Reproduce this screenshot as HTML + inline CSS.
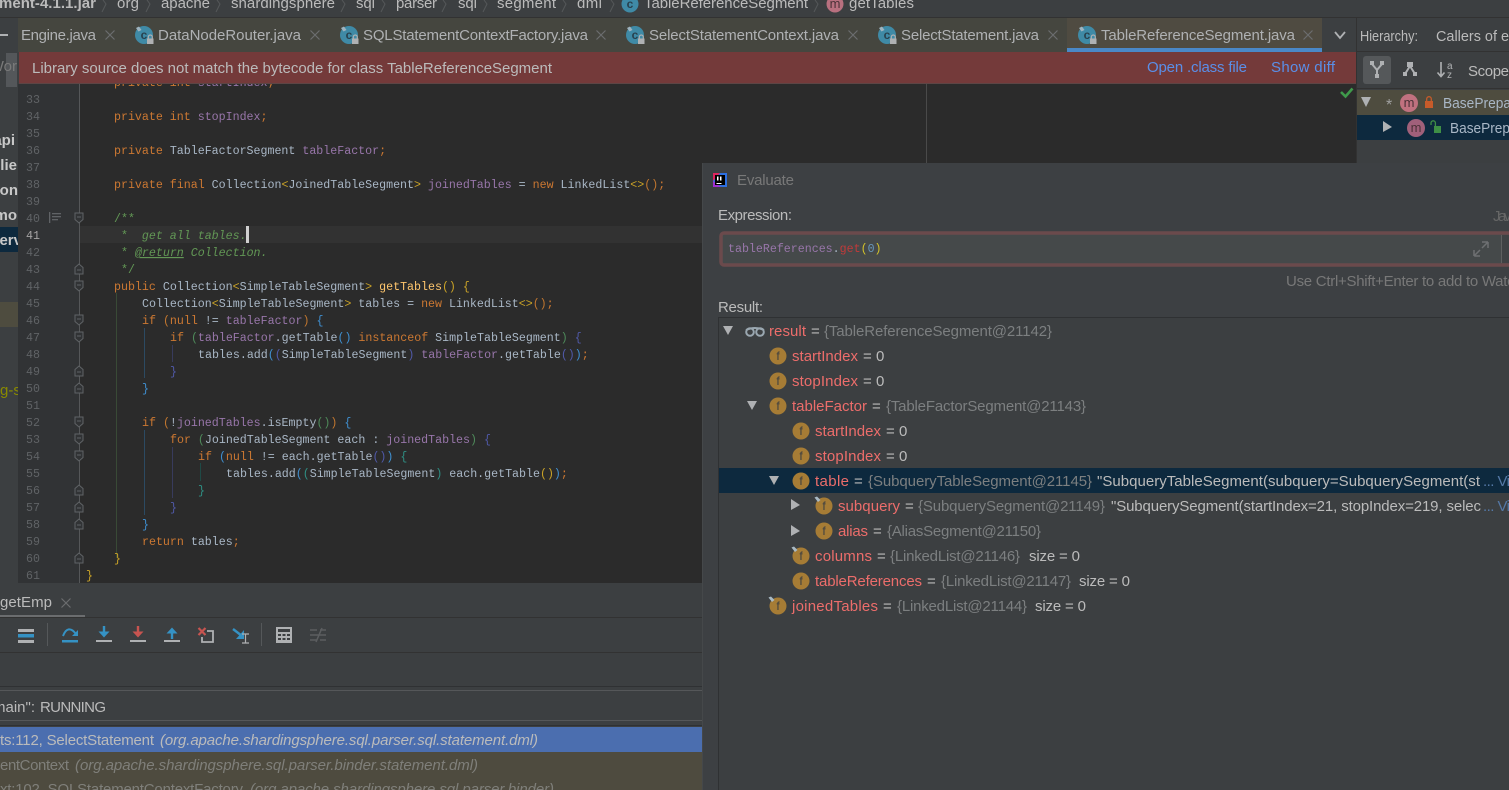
<!DOCTYPE html>
<html lang="en">
<head>
<meta charset="utf-8">
<title>IntelliJ IDEA - TableReferenceSegment</title>
<style>
html,body{margin:0;padding:0;background:#3c3f41;width:1509px;height:790px;overflow:hidden}
svg{display:block}
text{white-space:pre}
.u{font-family:"Liberation Sans",sans-serif;font-size:15px;fill:#bbbbbb}
.t{font-family:"Liberation Sans",sans-serif;font-size:15px;fill:#afb1b3}
.b{font-family:"Liberation Sans",sans-serif;font-size:15px;font-weight:bold;fill:#c8c8c8}
.m{font-family:"Liberation Mono",monospace;font-size:11.64px;fill:#a9b7c6}
.n{font-family:"Liberation Mono",monospace;font-size:11.64px;fill:#606366}
.k{fill:#cc7832}.v{fill:#9876aa}.c{fill:#629755}.y{fill:#ffc66d}.g{fill:#c9a227}
.o{fill:#c0762f}.l{fill:#3f8fd0}.gr{fill:#4e8a5a}.i{fill:#5059a8}.te{fill:#2f8f84}
.nm{font-family:"Liberation Sans",sans-serif;font-size:15px;fill:#ec6d6b}
.val{font-family:"Liberation Sans",sans-serif;font-size:15px;fill:#7c7f80}
.ff{font-family:"Liberation Sans",sans-serif;font-size:12px;fill:#3c3f41;text-anchor:middle}
.cc{font-family:"Liberation Sans",sans-serif;font-weight:bold;font-size:12px;fill:#28414e;text-anchor:middle}
.mm{font-family:"Liberation Sans",sans-serif;font-size:13px;fill:#4c3238;text-anchor:middle}
</style>
</head>
<body>
<svg width="1509" height="790" viewBox="0 0 1509 790" xmlns="http://www.w3.org/2000/svg">
<defs>
<symbol id="cls" overflow="visible" viewBox="0 0 20 20" width="20" height="20">
<circle cx="10" cy="10" r="9" fill="#3f8aa6"/>
<path d="M2 3 L5 1.5 L7.5 5 L4.5 6.5Z" fill="#9fb4bf"/>
<rect x="13" y="13.5" width="6.5" height="5.5" fill="#afb1b3"/>
<path d="M14.3 13.5v-1.5a2 2 0 0 1 4 0v1.5" fill="none" stroke="#afb1b3" stroke-width="1.2"/>
</symbol>
<symbol id="fstart" overflow="visible" viewBox="0 0 10 12" width="10" height="12">
<path d="M1 1H9V7.5L5 11L1 7.5Z" fill="#313335" stroke="#606366" stroke-width="1"/>
<path d="M3 5H7" stroke="#606366"/>
</symbol>
<symbol id="fend" overflow="visible" viewBox="0 0 10 12" width="10" height="12">
<path d="M1 11H9V4.5L5 1L1 4.5Z" fill="#313335" stroke="#606366" stroke-width="1"/>
<path d="M3 7H7" stroke="#606366"/>
</symbol>
<symbol id="pin" overflow="visible" viewBox="0 0 8 8" width="8" height="8">
<path d="M0.5 1.5 L3 0.5 L6.5 4 L4 6Z" fill="#a9bac4"/>
</symbol>
</defs>

<rect width="1509" height="790" fill="#3c3f41"/>

<!-- left project panel -->
<rect x="0" y="18" width="18" height="566" fill="#3c3f41"/>
<rect x="0" y="34" width="8" height="2" fill="#afb1b3"/>
<rect x="6" y="53" width="11" height="34" fill="#54575a"/>
<text class="u" x="17" y="71" text-anchor="end" style="fill:#7a7a7a">Wor</text>
<rect x="0" y="227" width="18" height="25" fill="#0d293e"/>
<rect x="0" y="302" width="18" height="25" fill="#4e4c3f"/>
<text class="b" x="15" y="145" text-anchor="end">api</text>
<text class="b" x="17" y="170" text-anchor="end">clie</text>
<text class="b" x="18" y="195" text-anchor="end">con</text>
<text class="b" x="17" y="220" text-anchor="end">mo</text>
<text class="b" x="22" y="245" text-anchor="end">serv</text>
<text class="u" x="0" y="395" style="fill:#8a8a00">g-s</text>

<!-- editor -->
<rect x="18" y="84" width="62" height="500" fill="#313335"/>
<rect x="80" y="84" width="1276" height="499" fill="#2b2b2b"/>
<rect x="18" y="226" width="62" height="17" fill="#313335"/>
<rect x="80" y="226" width="622" height="17" fill="#323232"/>
<rect x="79" y="84" width="1" height="499" fill="#555759"/>
<rect x="926" y="84" width="1" height="80" fill="#4a4a4a"/>

<!-- indent guides -->
<rect x="116" y="293" width="1" height="265" fill="#394a36"/>
<rect x="144" y="328" width="1" height="50" fill="#2c4a62"/>
<rect x="172" y="345" width="1" height="17" fill="#383b5c"/>
<rect x="144" y="430" width="1" height="85" fill="#2c4a62"/>
<rect x="172" y="447" width="1" height="51" fill="#383b5c"/>
<rect x="200" y="463" width="1" height="18" fill="#1f4a46"/>

<!-- line numbers -->
<text class="n" x="26" y="103">33</text>
<text class="n" x="26" y="120">34</text>
<text class="n" x="26" y="137">35</text>
<text class="n" x="26" y="154">36</text>
<text class="n" x="26" y="171">37</text>
<text class="n" x="26" y="188">38</text>
<text class="n" x="26" y="205">39</text>
<text class="n" x="26" y="222">40</text>
<text class="n" x="26" y="239" style="fill:#a4a3a3">41</text>
<text class="n" x="26" y="256">42</text>
<text class="n" x="26" y="273">43</text>
<text class="n" x="26" y="290">44</text>
<text class="n" x="26" y="307">45</text>
<text class="n" x="26" y="324">46</text>
<text class="n" x="26" y="341">47</text>
<text class="n" x="26" y="358">48</text>
<text class="n" x="26" y="375">49</text>
<text class="n" x="26" y="392">50</text>
<text class="n" x="26" y="409">51</text>
<text class="n" x="26" y="426">52</text>
<text class="n" x="26" y="443">53</text>
<text class="n" x="26" y="460">54</text>
<text class="n" x="26" y="477">55</text>
<text class="n" x="26" y="494">56</text>
<text class="n" x="26" y="511">57</text>
<text class="n" x="26" y="528">58</text>
<text class="n" x="26" y="545">59</text>
<text class="n" x="26" y="562">60</text>
<text class="n" x="26" y="579">61</text>

<!-- doc icon -->
<g fill="#606366"><rect x="49" y="212" width="1.3" height="11"/><rect x="52" y="213" width="9" height="1.3"/><rect x="52" y="216" width="9" height="1.3"/><rect x="52" y="219" width="6" height="1.3"/></g>

<!-- fold markers -->
<use href="#fstart" x="74" y="212"/>
<use href="#fend" x="74" y="263"/>
<use href="#fstart" x="74" y="280"/>
<use href="#fstart" x="74" y="314"/>
<use href="#fstart" x="74" y="331"/>
<use href="#fend" x="74" y="365"/>
<use href="#fend" x="74" y="382"/>
<use href="#fstart" x="74" y="416"/>
<use href="#fstart" x="74" y="433"/>
<use href="#fstart" x="74" y="450"/>
<use href="#fend" x="74" y="484"/>
<use href="#fend" x="74" y="501"/>
<use href="#fend" x="74" y="518"/>
<use href="#fend" x="74" y="552"/>

<!-- code -->
<text class="m" x="114" y="86"><tspan class="k">private int </tspan><tspan class="v">startIndex</tspan><tspan class="k">;</tspan></text>
<text class="m" x="114" y="120"><tspan class="k">private int </tspan><tspan class="v">stopIndex</tspan><tspan class="k">;</tspan></text>
<text class="m" x="114" y="154"><tspan class="k">private </tspan>TableFactorSegment <tspan class="v">tableFactor</tspan><tspan class="k">;</tspan></text>
<text class="m" x="114" y="188"><tspan class="k">private final </tspan>Collection<tspan class="g">&lt;</tspan>JoinedTableSegment<tspan class="g">&gt;</tspan> <tspan class="v">joinedTables</tspan> = <tspan class="k">new </tspan>LinkedList<tspan class="g">&lt;&gt;</tspan><tspan class="o">()</tspan><tspan class="k">;</tspan></text>
<text class="m c" x="114" y="222">/**</text>
<text class="m" x="114" y="239"><tspan class="c"> *  </tspan><tspan class="c" font-style="italic">get all tables.</tspan></text>
<rect x="246" y="226" width="3" height="17" fill="#d0d0d0"/>
<text class="m" x="114" y="256"><tspan class="c"> * </tspan><tspan class="c" font-style="italic" text-decoration="underline">@return</tspan><tspan class="c" font-style="italic"> Collection.</tspan></text>
<text class="m c" x="114" y="273"> */</text>
<text class="m" x="114" y="290"><tspan class="k">public </tspan>Collection<tspan class="g">&lt;</tspan>SimpleTableSegment<tspan class="g">&gt;</tspan> <tspan class="y">getTables</tspan><tspan class="g">() {</tspan></text>
<text class="m" x="142" y="307">Collection<tspan class="g">&lt;</tspan>SimpleTableSegment<tspan class="g">&gt;</tspan> tables = <tspan class="k">new </tspan>LinkedList<tspan class="g">&lt;&gt;</tspan><tspan class="o">()</tspan><tspan class="k">;</tspan></text>
<text class="m" x="142" y="324"><tspan class="k">if </tspan><tspan class="o">(</tspan><tspan class="k">null</tspan> != <tspan class="v">tableFactor</tspan><tspan class="o">)</tspan> <tspan class="l">{</tspan></text>
<text class="m" x="170" y="341"><tspan class="k">if </tspan><tspan class="gr">(</tspan><tspan class="v">tableFactor</tspan>.getTable<tspan class="l">()</tspan> <tspan class="k">instanceof </tspan>SimpleTableSegment<tspan class="gr">)</tspan> <tspan class="i">{</tspan></text>
<text class="m" x="198" y="358">tables.add<tspan class="l">(</tspan><tspan class="i">(</tspan>SimpleTableSegment<tspan class="i">)</tspan> <tspan class="v">tableFactor</tspan>.getTable<tspan class="i">()</tspan><tspan class="l">)</tspan><tspan class="k">;</tspan></text>
<text class="m i" x="170" y="375">}</text>
<text class="m l" x="142" y="392">}</text>
<text class="m" x="142" y="426"><tspan class="k">if </tspan><tspan class="o">(</tspan>!<tspan class="v">joinedTables</tspan>.isEmpty<tspan class="gr">()</tspan><tspan class="o">)</tspan> <tspan class="l">{</tspan></text>
<text class="m" x="170" y="443"><tspan class="k">for </tspan><tspan class="gr">(</tspan>JoinedTableSegment each : <tspan class="v">joinedTables</tspan><tspan class="gr">)</tspan> <tspan class="i">{</tspan></text>
<text class="m" x="198" y="460"><tspan class="k">if </tspan><tspan class="l">(</tspan><tspan class="k">null</tspan> != each.getTable<tspan class="i">()</tspan><tspan class="l">)</tspan> <tspan class="te">{</tspan></text>
<text class="m" x="226" y="477">tables.add<tspan class="l">(</tspan><tspan class="te">(</tspan>SimpleTableSegment<tspan class="te">)</tspan> each.getTable<tspan class="g">()</tspan><tspan class="l">)</tspan><tspan class="k">;</tspan></text>
<text class="m te" x="198" y="494">}</text>
<text class="m i" x="170" y="511">}</text>
<text class="m l" x="142" y="528">}</text>
<text class="m" x="142" y="545"><tspan class="k">return </tspan>tables<tspan class="k">;</tspan></text>
<text class="m g" x="114" y="562">}</text>
<text class="m g" x="86" y="579">}</text>

<!-- check mark -->
<path d="M1341 92 L1345.5 96.5 L1352.5 88.5" fill="none" stroke="#3f9a4b" stroke-width="2.6"/>

<!-- breadcrumb -->
<rect x="0" y="0" width="1509" height="17" fill="#3c3f41"/>
<rect x="0" y="17" width="1509" height="1" fill="#323232"/>
<text class="b" x="-1" y="8" textLength="97" style="fill:#bbbbbb">ment-4.1.1.jar</text>
<g fill="none" stroke="#55585a"><path d="M103 0L106 4L102 12"/><path d="M147 0L150 4L146 12"/><path d="M217 0L220 4L216 12"/><path d="M342 0L345 4L341 12"/><path d="M382 0L385 4L381 12"/><path d="M443 0L446 4L442 12"/><path d="M484 0L487 4L483 12"/><path d="M563 0L566 4L562 12"/><path d="M611 0L614 4L610 12"/><path d="M815 0L818 4L814 12"/></g>
<text class="u" x="117" y="8" textLength="22">org</text>
<text class="u" x="161" y="8" textLength="49">apache</text>
<text class="u" x="231" y="8" textLength="104">shardingsphere</text>
<text class="u" x="356" y="8" textLength="19">sql</text>
<text class="u" x="396" y="8" textLength="41">parser</text>
<text class="u" x="458" y="8" textLength="19">sql</text>
<text class="u" x="497" y="8" textLength="59">segment</text>
<text class="u" x="577" y="8" textLength="25">dml</text>
<circle cx="630" cy="4" r="8.5" fill="#3f8aa6"/><text class="cc" x="630" y="8">c</text>
<text class="u" x="644" y="8" textLength="164">TableReferenceSegment</text>
<circle cx="835" cy="4" r="8.5" fill="#b8707f"/><text class="mm" x="835" y="8">m</text>
<text class="u" x="849" y="8" textLength="65">getTables</text>

<!-- tabs -->
<rect x="18" y="18" width="1304" height="34" fill="#45463f"/>
<rect x="1067" y="18" width="255" height="34" fill="#4f4b41"/>
<rect x="1067" y="48" width="255" height="4" fill="#4a88c7"/>
<rect x="1322" y="18" width="34" height="34" fill="#3c3f41"/>
<text class="t" x="21" y="40" textLength="75">Engine.java</text>
<g stroke="#6b6d6f" stroke-width="1.2" fill="none">
<path d="M105.5 30.5l9 9M114.5 30.5l-9 9"/>
<path d="M310.5 30.5l9 9M319.5 30.5l-9 9"/>
<path d="M596.5 30.5l9 9M605.5 30.5l-9 9"/>
<path d="M848.5 30.5l9 9M857.5 30.5l-9 9"/>
<path d="M1048.5 30.5l9 9M1057.5 30.5l-9 9"/>
<path d="M1303.5 30.5l9 9M1312.5 30.5l-9 9"/>
</g>
<use href="#cls" x="134" y="25"/><text class="cc" x="144" y="39">c</text>
<text class="t" x="158" y="40" textLength="143">DataNodeRouter.java</text>
<use href="#cls" x="339" y="25"/><text class="cc" x="349" y="39">c</text>
<text class="t" x="363" y="40" textLength="225">SQLStatementContextFactory.java</text>
<use href="#cls" x="625" y="25"/><text class="cc" x="635" y="39">c</text>
<text class="t" x="649" y="40" textLength="190">SelectStatementContext.java</text>
<use href="#cls" x="877" y="25"/><text class="cc" x="887" y="39">c</text>
<text class="t" x="901" y="40" textLength="138">SelectStatement.java</text>
<use href="#cls" x="1077" y="25"/><text class="cc" x="1087" y="39">c</text>
<text class="t" x="1101" y="40" textLength="194">TableReferenceSegment.java</text>
<path d="M1335 32L1340 38L1345 32" fill="none" stroke="#afb1b3" stroke-width="1.8"/>

<!-- library source banner -->
<rect x="19" y="52" width="1337" height="32" fill="#743a3a"/>
<rect x="19" y="83" width="1337" height="1" fill="#5d4545"/>
<text class="u" x="32" y="73" textLength="520">Library source does not match the bytecode for class TableReferenceSegment</text>
<text class="u" x="1147" y="72" textLength="100" style="fill:#5a8fe8">Open .class file</text>
<text class="u" x="1271" y="72" textLength="64" style="fill:#5a8fe8">Show diff</text>

<!-- hierarchy panel -->
<rect x="1356" y="18" width="1" height="146" fill="#323232"/>
<rect x="1357" y="18" width="152" height="146" fill="#3c3f41"/>
<rect x="1357" y="51" width="152" height="1" fill="#323232"/>
<rect x="1357" y="88" width="152" height="1" fill="#323232"/>
<text class="u" x="1360" y="41" textLength="58" lengthAdjust="spacingAndGlyphs">Hierarchy:</text>
<text class="u" x="1436" y="41" textLength="73" lengthAdjust="spacingAndGlyphs">Callers of e</text>
<rect x="1363" y="56" width="28" height="28" rx="3" fill="#55585a"/>
<path d="M1372 64L1377 70L1382 64M1377 70V77" fill="none" stroke="#afb1b3" stroke-width="2"/>
<rect x="1370" y="61" width="4" height="4" fill="#afb1b3"/><rect x="1380" y="61" width="4" height="4" fill="#afb1b3"/><rect x="1375" y="74" width="4" height="4" fill="#afb1b3"/>
<path d="M1410 66L1405 74M1410 66L1415 74" fill="none" stroke="#afb1b3" stroke-width="2"/>
<rect x="1407" y="62" width="6" height="5" fill="#afb1b3"/><rect x="1403" y="72" width="4" height="4" fill="#afb1b3"/><rect x="1413" y="72" width="4" height="4" fill="#afb1b3"/>
<path d="M1441 62V76M1437.5 72.5L1441 76.5L1444.5 72.5" fill="none" stroke="#afb1b3" stroke-width="1.6"/>
<text x="1447" y="69" font-family="Liberation Sans" font-size="10" fill="#afb1b3">a</text>
<text x="1447" y="78" font-family="Liberation Sans" font-size="10" fill="#afb1b3">z</text>
<text class="u" x="1468" y="76" textLength="41">Scope</text>
<rect x="1357" y="90" width="152" height="25" fill="#4e4c3f"/>
<rect x="1357" y="115" width="152" height="25" fill="#0d293e"/>
<path d="M1361 97H1371L1366 107Z" fill="#afb1b3"/>
<text x="1386" y="110" font-family="Liberation Sans" font-size="16" fill="#a0a0a0">*</text>
<circle cx="1409" cy="103" r="9" fill="#c0717f"/><text class="mm" x="1409" y="107">m</text>
<rect x="1425" y="101" width="8" height="7" fill="#c75b2a"/><path d="M1426.7 101v-2a2.3 2.3 0 0 1 4.6 0v2" fill="none" stroke="#c75b2a" stroke-width="1.3"/>
<text class="u" x="1443" y="108" textLength="68" lengthAdjust="spacingAndGlyphs" style="fill:#a9b7c6">BasePrepa</text>
<path d="M1383 121V132L1392 127Z" fill="#afb1b3"/>
<circle cx="1416" cy="128" r="9" fill="#a0607a"/><text class="mm" x="1416" y="132">m</text>
<rect x="1434" y="126" width="7" height="7" fill="#3f8f46"/><path d="M1431 125v-2a2.2 2.2 0 0 1 4.4 0v3" fill="none" stroke="#3f8f46" stroke-width="1.3"/>
<text class="u" x="1450" y="133" textLength="60" lengthAdjust="spacingAndGlyphs" style="fill:#a9b7c6">BasePrep</text>

<!-- debug panel -->
<rect x="0" y="583" width="703" height="207" fill="#3c3f41"/>
<rect x="0" y="615" width="85" height="2" fill="#6b6d6f"/>
<rect x="0" y="617" width="703" height="1" fill="#323232"/>
<rect x="0" y="652" width="703" height="1" fill="#323232"/>
<rect x="0" y="686" width="703" height="1" fill="#2f3133"/>
<rect x="0" y="690" width="703" height="1" fill="#555759"/>
<rect x="0" y="720" width="703" height="1" fill="#555759"/>
<rect x="0" y="725" width="703" height="1" fill="#2f3133"/>
<text class="u" x="0" y="607" textLength="52">getEmp</text>
<path d="M61.5 598.5l9 9M70.5 598.5l-9 9" stroke="#6b6d6f" stroke-width="1.2"/>
<rect x="18" y="629" width="16" height="3" fill="#afb1b3"/><rect x="18" y="634" width="16" height="3.5" fill="#3592c4"/><rect x="18" y="640" width="16" height="3" fill="#afb1b3"/>
<rect x="47" y="623" width="1" height="23" fill="#55585a"/>
<rect x="62" y="640" width="16" height="2.5" fill="#3592c4"/>
<path d="M63 636C66 628 71 627 76 634" fill="none" stroke="#3592c4" stroke-width="2"/><path d="M72 636H78V630Z" fill="#3592c4"/>
<rect x="96" y="640" width="16" height="2" fill="#afb1b3"/>
<path d="M104 626V634" stroke="#3592c4" stroke-width="2.4"/><path d="M98.5 631.5H109.5L104 637.5Z" fill="#3592c4"/>
<rect x="130" y="640" width="16" height="2" fill="#afb1b3"/>
<path d="M138 626V634" stroke="#c75450" stroke-width="2.4"/><path d="M132.5 631.5H143.5L138 637.5Z" fill="#c75450"/>
<rect x="164" y="640" width="16" height="2" fill="#afb1b3"/>
<path d="M172 639V631" stroke="#3592c4" stroke-width="2.4"/><path d="M166.5 633.5H177.5L172 627.5Z" fill="#3592c4"/>
<path d="M198.5 628l7 7M205.5 628l-7 7" stroke="#c75450" stroke-width="2.2"/>
<path d="M207 631H213V642H202V637" fill="none" stroke="#afb1b3" stroke-width="1.8"/>
<path d="M233 629L242 636" stroke="#3592c4" stroke-width="2.4"/><path d="M244 630V639H236Z" fill="#3592c4"/>
<path d="M242 634H249M245.500 634V643M242 643H249" fill="none" stroke="#afb1b3" stroke-width="1.2"/>
<rect x="261" y="623" width="1" height="23" fill="#55585a"/>
<rect x="276" y="627" width="16" height="16" fill="#afb1b3"/>
<rect x="278" y="629" width="12" height="3" fill="#3c3f41"/>
<g fill="#3c3f41"><rect x="278" y="634" width="3" height="2"/><rect x="282.500" y="634" width="3" height="2"/><rect x="287" y="634" width="3" height="2"/><rect x="278" y="638" width="3" height="2"/><rect x="282.500" y="638" width="3" height="2"/><rect x="287" y="638" width="3" height="2"/></g>
<path d="M310 630H317M320 630H326M310 635H326M310 640H317M320 640H326M322 628L316 642" fill="none" stroke="#5c5e60" stroke-width="1.5"/>
<text class="u" x="35" y="712" text-anchor="end">main":</text>
<text class="u" x="40" y="712" textLength="66">RUNNING</text>
<rect x="0" y="727" width="703" height="25" fill="#4b6eaf"/>
<rect x="0" y="752" width="703" height="38" fill="#4e4b3f"/>
<text class="u" x="0" y="745" textLength="154">ts:112, SelectStatement</text>
<text class="u" x="160" y="745" textLength="378" font-style="italic">(org.apache.shardingsphere.sql.parser.sql.statement.dml)</text>
<text class="u" x="0" y="770" textLength="69" style="fill:#7f7f7a">entContext</text>
<text class="u" x="75" y="770" textLength="403" font-style="italic" style="fill:#7f7f7a">(org.apache.shardingsphere.sql.parser.binder.statement.dml)</text>
<text class="u" x="0" y="794" textLength="243" style="fill:#7f7f7a">xt:102, SQLStatementContextFactory</text>
<text class="u" x="250" y="794" textLength="304" font-style="italic" style="fill:#7f7f7a">(org.apache.shardingsphere.sql.parser.binder)</text>

<!-- evaluate dialog -->
<rect x="702" y="163" width="807" height="627" fill="#3d4043"/>
<rect x="702" y="163" width="1" height="627" fill="#45484a"/>
<rect x="713" y="173" width="14" height="14" fill="#2d6fe0"/>
<path d="M713 173H720L713 181Z" fill="#e0245e"/>
<path d="M713 181V187H721Z" fill="#a02fd0"/>
<rect x="715" y="175" width="10" height="10" fill="#000"/>
<rect x="716.500" y="183" width="5" height="1" fill="#fff"/>
<rect x="717" y="176.500" width="1.500" height="4" fill="#fff"/><rect x="720" y="176.500" width="1.500" height="4" fill="#fff"/>
<text class="u" x="737" y="185" textLength="57" style="fill:#787878">Evaluate</text>
<text class="u" x="718" y="220" textLength="74">Expression:</text>
<text class="u" x="1493" y="221" textLength="24" style="fill:#666">Java</text>
<rect x="721" y="233" width="900" height="32" rx="3" fill="#45494a" stroke="#6b4a4c" stroke-width="3.500"/>
<rect x="1501" y="235" width="1" height="28" fill="#5e6060"/>
<rect x="1502" y="235" width="7" height="28" fill="#3f4244"/>
<text class="m" x="728" y="252"><tspan class="v">tableReferences</tspan>.<tspan style="fill:#c13a3a">get</tspan><tspan style="fill:#d4c32a">(</tspan><tspan style="fill:#6897bb">0</tspan><tspan style="fill:#d4c32a">)</tspan></text>
<path d="M1474 256V250M1474 256H1480M1474 256L1480 250M1488 242V248M1488 242H1482M1488 242L1482 248" fill="none" stroke="#6e7072" stroke-width="1.5"/>
<text class="u" x="1286" y="286" textLength="252" style="fill:#787878">Use Ctrl+Shift+Enter to add to Watches</text>
<text class="u" x="718" y="312" textLength="45">Result:</text>

<!-- result tree -->
<rect x="718" y="317" width="791" height="473" fill="#3c3f41"/>
<rect x="718" y="317" width="791" height="1" fill="#2f3133"/>
<rect x="718" y="317" width="1" height="473" fill="#2f3133"/>
<rect x="719" y="468" width="790" height="25" fill="#0d293e"/>

<path d="M723 326H733L728 335Z" fill="#afb1b3"/>
<g fill="none" stroke="#9aa7b0" stroke-width="2"><circle cx="750" cy="332" r="3.800"/><circle cx="760" cy="332" r="3.800"/><path d="M746 330Q755 326 764 330"/></g>
<text class="nm" x="769" y="336" textLength="37">result</text>
<text class="u" x="811" y="336">=</text>
<text class="val" x="824" y="336" textLength="228">{TableReferenceSegment@21142}</text>

<circle cx="778" cy="356" r="8.500" fill="#a67c35"/><text class="ff" x="778" y="360">f</text>
<text class="nm" x="792" y="361" textLength="66">startIndex</text>
<text class="u" x="863" y="361">=</text><text class="u" x="876" y="361">0</text>

<circle cx="778" cy="381" r="8.500" fill="#a67c35"/><text class="ff" x="778" y="385">f</text>
<text class="nm" x="792" y="386" textLength="66">stopIndex</text>
<text class="u" x="863" y="386">=</text><text class="u" x="876" y="386">0</text>

<path d="M747 401H757L752 410Z" fill="#afb1b3"/>
<circle cx="778" cy="406" r="8.500" fill="#a67c35"/><text class="ff" x="778" y="410">f</text>
<text class="nm" x="792" y="411" textLength="75">tableFactor</text>
<text class="u" x="872" y="411">=</text>
<text class="val" x="886" y="411" textLength="200">{TableFactorSegment@21143}</text>

<circle cx="801" cy="431" r="8.500" fill="#a67c35"/><text class="ff" x="801" y="435">f</text>
<text class="nm" x="815" y="436" textLength="66">startIndex</text>
<text class="u" x="886" y="436">=</text><text class="u" x="899" y="436">0</text>

<circle cx="801" cy="456" r="8.500" fill="#a67c35"/><text class="ff" x="801" y="460">f</text>
<text class="nm" x="815" y="461" textLength="66">stopIndex</text>
<text class="u" x="886" y="461">=</text><text class="u" x="899" y="461">0</text>

<path d="M769 476H779L774 485Z" fill="#afb1b3"/>
<circle cx="801" cy="481" r="8.500" fill="#a67c35"/><text class="ff" x="801" y="485">f</text>
<text class="nm" x="815" y="486" textLength="34">table</text>
<text class="u" x="854" y="486">=</text>
<text class="val" x="868" y="486" textLength="224">{SubqueryTableSegment@21145}</text>
<text class="u" x="1097" y="486" textLength="383">"SubqueryTableSegment(subquery=SubquerySegment(st</text>
<text class="u" x="1483" y="486" textLength="27" style="fill:#5478a6">... Vi</text>

<path d="M791 499V510L800 505Z" fill="#afb1b3"/>
<circle cx="824" cy="506" r="8.500" fill="#a67c35"/><text class="ff" x="824" y="510">f</text>
<use href="#pin" x="814" y="496"/>
<text class="nm" x="838" y="511" textLength="62">subquery</text>
<text class="u" x="905" y="511">=</text>
<text class="val" x="918" y="511" textLength="187">{SubquerySegment@21149}</text>
<text class="u" x="1111" y="511" textLength="370">"SubquerySegment(startIndex=21, stopIndex=219, selec</text>
<text class="u" x="1483" y="511" textLength="27" style="fill:#5478a6">... Vi</text>

<path d="M791 525V536L800 531Z" fill="#afb1b3"/>
<circle cx="824" cy="531" r="8.500" fill="#a67c35"/><text class="ff" x="824" y="535">f</text>
<text class="nm" x="838" y="536" textLength="30">alias</text>
<text class="u" x="873" y="536">=</text>
<text class="val" x="887" y="536" textLength="154">{AliasSegment@21150}</text>

<circle cx="801" cy="556" r="8.500" fill="#a67c35"/><text class="ff" x="801" y="560">f</text>
<use href="#pin" x="791" y="546"/>
<text class="nm" x="815" y="561" textLength="57">columns</text>
<text class="u" x="877" y="561">=</text>
<text class="val" x="890" y="561" textLength="130">{LinkedList@21146}</text>
<text class="u" x="1029" y="561" textLength="51">size = 0</text>

<circle cx="801" cy="581" r="8.500" fill="#a67c35"/><text class="ff" x="801" y="585">f</text>
<text class="nm" x="815" y="586" textLength="107">tableReferences</text>
<text class="u" x="927" y="586">=</text>
<text class="val" x="941" y="586" textLength="130">{LinkedList@21147}</text>
<text class="u" x="1079" y="586" textLength="51">size = 0</text>

<circle cx="778" cy="606" r="8.500" fill="#a67c35"/><text class="ff" x="778" y="610">f</text>
<use href="#pin" x="768" y="596"/>
<text class="nm" x="792" y="611" textLength="86">joinedTables</text>
<text class="u" x="883" y="611">=</text>
<text class="val" x="897" y="611" textLength="130">{LinkedList@21144}</text>
<text class="u" x="1035" y="611" textLength="51">size = 0</text>
</svg>
</body>
</html>
